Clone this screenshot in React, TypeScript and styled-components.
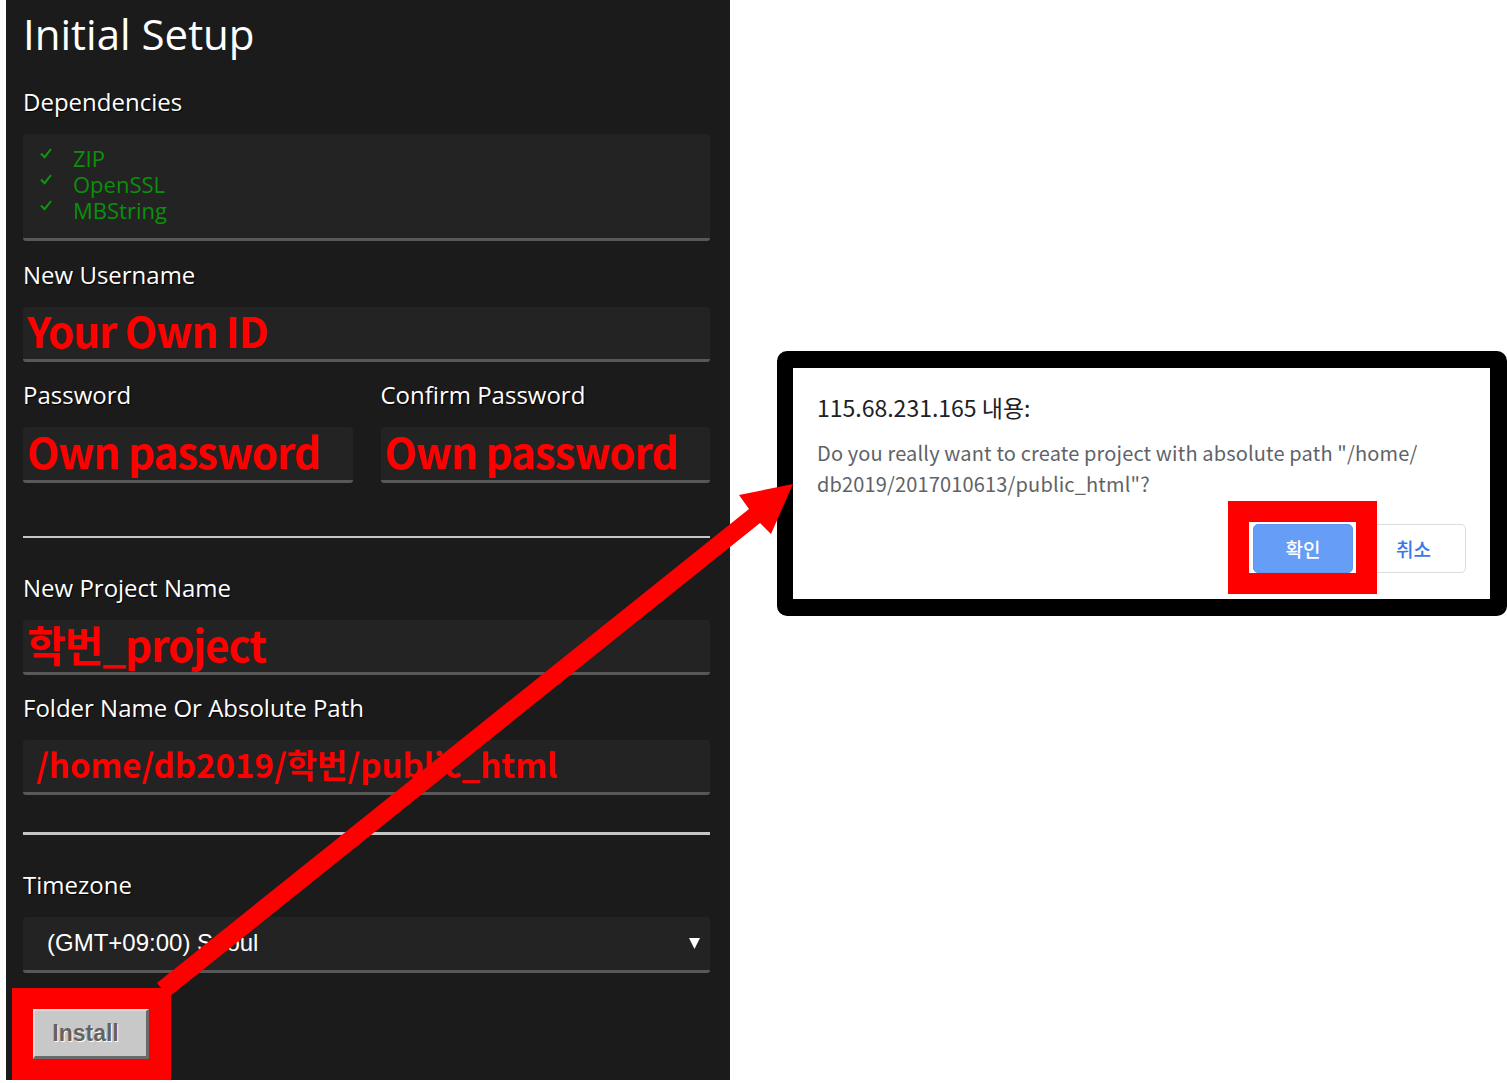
import React from 'react';
import styled, { createGlobalStyle } from 'styled-components';

const GlobalStyle = createGlobalStyle`
	html, body {
		margin: 0;
		padding: 0;
		background: #ffffff;
	}
	body {
		font-family: "Open Sans", "Noto Sans", sans-serif;
	}
`;

type Dep = { name: string };

const deps: Dep[] = [{ name: 'ZIP' }, { name: 'OpenSSL' }, { name: 'MBString' }];

const CheckIcon: React.FC = () => (
	<svg width="12" height="11" viewBox="0 0 12 11">
		<path d="M1 5.5 L4.6 9.2 L11 1" fill="none" stroke="#0b9a0b" strokeWidth="2" />
	</svg>
);

const App: React.FC = () => {
	return (
		<Page>
			<GlobalStyle />
			<SetupPanel>
				<Title>Initial Setup</Title>

				<FieldLabel top={28}>Dependencies</FieldLabel>
				<DepsBox>
					{deps.map((d) => (
						<DepRow key={d.name}>
							<CheckMark>
								<CheckIcon />
							</CheckMark>
							{d.name}
						</DepRow>
					))}
				</DepsBox>

				<FieldLabel top={20}>New Username</FieldLabel>
				<InputBox>
					<Filled>Your Own ID</Filled>
				</InputBox>

				<PasswordRow>
					<Column>
						<FieldLabel top={19}>Password</FieldLabel>
						<InputBox>
							<Filled>Own password</Filled>
						</InputBox>
					</Column>
					<Column>
						<FieldLabel top={19}>Confirm Password</FieldLabel>
						<InputBox>
							<Filled>Own password</Filled>
						</InputBox>
					</Column>
				</PasswordRow>

				<Divider top={53} thick={2} />

				<FieldLabel top={36}>New Project Name</FieldLabel>
				<InputBox>
					<Filled>학번_project</Filled>
				</InputBox>

				<FieldLabel top={19}>Folder Name Or Absolute Path</FieldLabel>
				<InputBox>
					<Filled small>/home/db2019/학번/public_html</Filled>
				</InputBox>

				<Divider top={37} thick={3} />

				<FieldLabel top={36}>Timezone</FieldLabel>
				<SelectBox>
					<span>(GMT+09:00) Seoul</span>
					<svg width="11" height="11" viewBox="0 0 11 11">
						<polygon points="0,0 11,0 5.5,11" fill="#ffffff" />
					</svg>
				</SelectBox>

				<Highlight>
					<InstallButton>Install</InstallButton>
				</Highlight>
			</SetupPanel>

			<DialogArea>
				<DialogFrame>
					<DialogTitle>115.68.231.165 내용:</DialogTitle>
					<DialogMessage>
						Do you really want to create project with absolute path "/home/
						<br />
						db2019/2017010613/public_html"?
					</DialogMessage>
					<DialogButtons>
						<MarkedWrap>
							<DialogButton primary>확인</DialogButton>
							<RedFrame />
						</MarkedWrap>
						<DialogButton>취소</DialogButton>
					</DialogButtons>
				</DialogFrame>
			</DialogArea>

			<ArrowLayer width="1507" height="1083" viewBox="0 0 1507 1083">
				<polygon
					points="157,983 749,509 739,495 793,484 771,534 760,523 169,997"
					fill="#ff0000"
				/>
			</ArrowLayer>
		</Page>
	);
};

const Page = styled.div`
	position: relative;
	display: flex;
	align-items: flex-start;
	width: 1507px;
	height: 1083px;
	overflow: hidden;
	background: #ffffff;
`;

const SetupPanel = styled.div`
	box-sizing: border-box;
	margin-left: 6px;
	width: 724px;
	height: 1080px;
	padding: 8px 20px 0 17px;
	background: #1b1b1b;
	display: flex;
	flex-direction: column;
`;

const Title = styled.h1`
	margin: 0;
	font-family: "Open Sans", "Noto Sans", sans-serif;
	font-weight: 400;
	font-size: 42px;
	line-height: 52px;
	color: #ffffff;
`;

const FieldLabel = styled.div<{ top: number }>`
	margin-top: ${(p) => p.top}px;
	margin-bottom: 18px;
	font-family: "Open Sans", "Noto Sans", sans-serif;
	font-weight: 500;
	font-size: 24px;
	line-height: 28px;
	color: #ffffff;
	text-shadow: 1px 1px 1px #000000;
	white-space: nowrap;
`;

const DepsBox = styled.div`
	box-sizing: border-box;
	height: 108px;
	padding: 11px 17px 0;
	background: #232323;
	border-radius: 3px;
	border-bottom: 3px solid #585858;
`;

const DepRow = styled.div`
	display: flex;
	align-items: center;
	height: 26px;
	font-family: "Open Sans", "Noto Sans", sans-serif;
	font-size: 22px;
	line-height: 26px;
	color: #0b8f0b;
`;

const CheckMark = styled.span`
	display: flex;
	width: 33px;
	margin-top: -9px;
`;

const InputBox = styled.div`
	box-sizing: border-box;
	height: 56px;
	display: flex;
	align-items: center;
	padding-left: 4px;
	background: #232323;
	border-radius: 3px;
	border-bottom: 3px solid #585858;
`;

const Filled = styled.span<{ small?: boolean }>`
	font-family: "Noto Sans CJK KR", "Noto Sans", sans-serif;
	font-weight: 700;
	font-size: ${(p) => (p.small ? '33px' : '42px')};
	letter-spacing: ${(p) => (p.small ? '0' : '-1px')};
	padding-left: ${(p) => (p.small ? '9px' : '0')};
	color: #ff0000;
	white-space: nowrap;
	line-height: 1.2;
	margin-top: ${(p) => (p.small ? '-2px' : '-4px')};
`;

const PasswordRow = styled.div`
	display: grid;
	grid-template-columns: minmax(0, 1fr) minmax(0, 1fr);
	column-gap: 28px;
`;

const Column = styled.div`
	min-width: 0;
`;

const Divider = styled.div<{ top: number; thick: number }>`
	margin-top: ${(p) => p.top}px;
	height: ${(p) => p.thick}px;
	background: #c6c6c6;
`;

const SelectBox = styled.div`
	box-sizing: border-box;
	height: 57px;
	display: flex;
	align-items: center;
	justify-content: space-between;
	padding: 0 10px 0 24px;
	background: #232323;
	border-radius: 3px;
	border-bottom: 3px solid #585858;
	font-family: "Liberation Sans", Arial, sans-serif;
	font-size: 24px;
	color: #ffffff;
`;

const Highlight = styled.div`
	align-self: flex-start;
	margin: 15px 0 0 -11px;
	padding: 21px 22px 21px 21px;
	background: #ff0000;
	line-height: 0;
`;

const InstallButton = styled.button`
	box-sizing: border-box;
	width: 116px;
	height: 50px;
	margin: 0;
	padding: 0 10px 0 0;
	background: #c8c8c8;
	border: none;
	border-top: 2px solid #dcdcdc;
	border-left: 2px solid #dcdcdc;
	border-right: 3px solid #6a6a6a;
	border-bottom: 3px solid #6a6a6a;
	font-family: "Liberation Sans", Arial, sans-serif;
	font-weight: 700;
	font-size: 23px;
	color: #636363;
	text-shadow: 1px 1px 0 #ffffff;
`;

const DialogArea = styled.div`
	padding: 351px 0 0 47px;
`;

const DialogFrame = styled.div`
	box-sizing: border-box;
	width: 730px;
	height: 265px;
	padding: 24px 24px 0 24px;
	background: #ffffff;
	border-style: solid;
	border-color: #000000;
	border-width: 17px 17px 17px 16px;
	border-radius: 10px;
	display: flex;
	flex-direction: column;
`;

const DialogTitle = styled.div`
	font-family: "Noto Sans CJK KR", "Noto Sans", sans-serif;
	font-size: 23px;
	line-height: 30px;
	color: #202124;
`;

const DialogMessage = styled.div`
	margin-top: 15px;
	font-family: "Noto Sans CJK KR", "Noto Sans", sans-serif;
	font-size: 20px;
	letter-spacing: 0.15px;
	line-height: 31px;
	color: #5f6368;
	white-space: nowrap;
`;

const DialogButtons = styled.div`
	margin-top: 25px;
	display: flex;
	justify-content: flex-end;
	gap: 8px;
`;

const MarkedWrap = styled.div`
	position: relative;
	display: flex;
`;

const DialogButton = styled.button<{ primary?: boolean }>`
	box-sizing: border-box;
	width: ${(p) => (p.primary ? '100px' : '105px')};
	height: 49px;
	border-radius: 5px;
	border: 1px solid ${(p) => (p.primary ? '#5f97f0' : '#dadce0')};
	background: ${(p) => (p.primary ? '#669df6' : '#ffffff')};
	color: ${(p) => (p.primary ? '#ffffff' : '#3b78e7')};
	font-family: "Noto Sans CJK KR", "Noto Sans", sans-serif;
	font-size: 19px;
	font-weight: 500;
	padding: 0;
`;

const RedFrame = styled.div`
	position: absolute;
	top: -23px;
	left: -25px;
	right: -24px;
	bottom: -21px;
	border: 21px solid #ff0000;
	z-index: 2;
`;

const ArrowLayer = styled.svg`
	position: absolute;
	left: 0;
	top: 0;
	pointer-events: none;
	z-index: 5;
`;

export default App;
